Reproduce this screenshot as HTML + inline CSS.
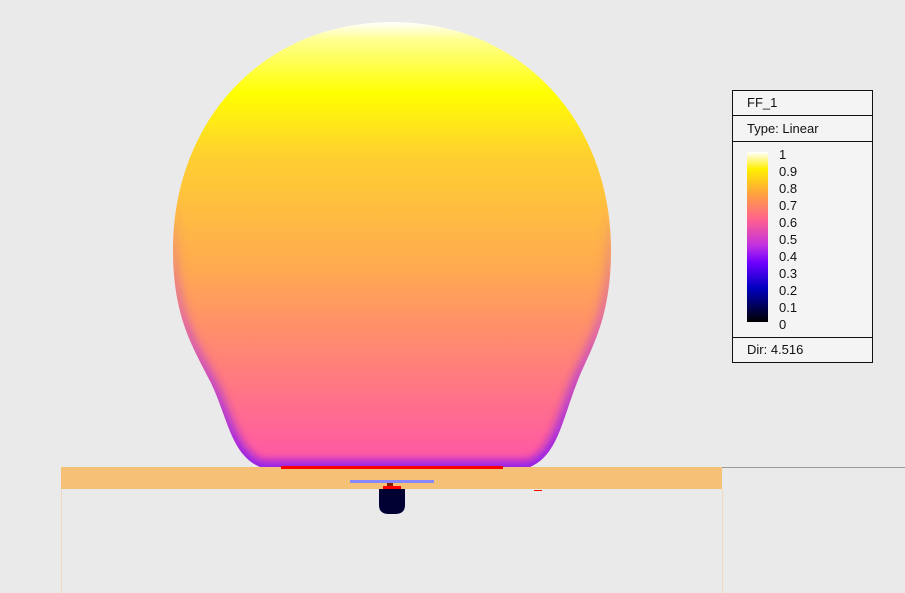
<!DOCTYPE html>
<html><head><style>
body{margin:0;width:905px;height:593px;background:#eaeaea;position:relative;overflow:hidden;font-family:"Liberation Sans",sans-serif}
.lg{position:absolute;left:732px;top:90px;width:139px;height:271px;border:1px solid #111;background:#f4f4f4;font-size:13px;color:#111}
.r{position:absolute;left:0;width:139px;border-bottom:1px solid #111}
.t{position:absolute;left:785px;font-size:13px;line-height:13px;color:#111}
</style></head><body>
<svg width="905" height="593" style="position:absolute;left:0;top:0">
<defs>
<linearGradient id="g" x1="0" y1="22" x2="0" y2="467" gradientUnits="userSpaceOnUse">
<stop offset="0" stop-color="#ffffff"/><stop offset="0.04" stop-color="#ffff90"/><stop offset="0.16" stop-color="#ffff00"/><stop offset="0.3" stop-color="#ffd030"/><stop offset="0.55" stop-color="#ffaa50"/><stop offset="0.8" stop-color="#ff7a80"/><stop offset="1" stop-color="#ff55a8"/>
</linearGradient>
<linearGradient id="cb" x1="0" y1="0" x2="0" y2="1">
<stop offset="0" stop-color="#fff"/><stop offset="0.1" stop-color="#fff000"/><stop offset="0.25" stop-color="#ffa040"/><stop offset="0.4" stop-color="#ff6090"/><stop offset="0.55" stop-color="#c030e0"/><stop offset="0.65" stop-color="#7000ff"/><stop offset="0.8" stop-color="#0000c0"/><stop offset="1" stop-color="#000"/>
</linearGradient>
<linearGradient id="eg" x1="0" y1="200" x2="0" y2="467" gradientUnits="userSpaceOnUse">
<stop offset="0" stop-color="#c040e0" stop-opacity="0"/><stop offset="0.45" stop-color="#c040e0" stop-opacity="0.6"/><stop offset="1" stop-color="#7010ff" stop-opacity="1"/>
</linearGradient>
<clipPath id="c"><path d="M392 22 C520 22 611 120 611 250 C611 320 590 350 578 380 C562 420 558 455 530 467 L260 467 C232 455 228 420 212 385 C195 350 173 320 173 250 C173 120 264 22 392 22 Z"/></clipPath>
<filter id="b"><feGaussianBlur stdDeviation="5"/></filter>
</defs>
<path d="M392 22 C520 22 611 120 611 250 C611 320 590 350 578 380 C562 420 558 455 530 467 L260 467 C232 455 228 420 212 385 C195 350 173 320 173 250 C173 120 264 22 392 22 Z" fill="url(#g)"/>
<g clip-path="url(#c)"><path d="M611 200 L611 250 C611 320 590 350 578 380 C562 420 558 455 530 467 L260 467 C232 455 228 420 212 385 C195 350 173 320 173 250 L173 200" fill="none" stroke="url(#eg)" stroke-width="10" filter="url(#b)"/></g>
<line x1="722" y1="467.5" x2="905" y2="467.5" stroke="#999"/>
<rect x="61" y="467" width="661" height="22" fill="#f4c177"/>
<rect x="281" y="466" width="222" height="3" fill="#ff0000"/>
<rect x="350" y="480" width="84" height="3" fill="#8888ff"/>
<rect x="387" y="483" width="6" height="3" fill="#802000"/>
<rect x="383" y="486" width="18" height="3" fill="#ff0000"/>
<path d="M379 489 H405 V505 Q405 514 395 514 H389 Q379 514 379 505 Z" fill="#000033"/>
<rect x="534" y="490" width="8" height="1" fill="#ff0000"/>
<line x1="61.5" y1="489" x2="61.5" y2="593" stroke="#f0d8c0"/>
<line x1="722.5" y1="489" x2="722.5" y2="593" stroke="#f0d8c0"/>
</svg>
<div class="lg">
<div class="r" style="top:0;height:24px"><span style="position:absolute;left:14px;top:4px">FF_1</span></div>
<div class="r" style="top:25px;height:25px"><span style="position:absolute;left:14px;top:5px">Type: Linear</span></div>
<div class="r" style="top:246px;height:0"></div>
<span style="position:absolute;left:14px;top:251px">Dir: 4.516</span>
</div>
<svg width="21" height="170" style="position:absolute;left:747px;top:152px"><rect width="21" height="170" fill="url(#cb)"/></svg>
<div class="t" style="top:148px;left:779px">1</div>
<div class="t" style="top:165px;left:779px">0.9</div>
<div class="t" style="top:182px;left:779px">0.8</div>
<div class="t" style="top:199px;left:779px">0.7</div>
<div class="t" style="top:216px;left:779px">0.6</div>
<div class="t" style="top:233px;left:779px">0.5</div>
<div class="t" style="top:250px;left:779px">0.4</div>
<div class="t" style="top:267px;left:779px">0.3</div>
<div class="t" style="top:284px;left:779px">0.2</div>
<div class="t" style="top:301px;left:779px">0.1</div>
<div class="t" style="top:318px;left:779px">0</div>
</body></html>
